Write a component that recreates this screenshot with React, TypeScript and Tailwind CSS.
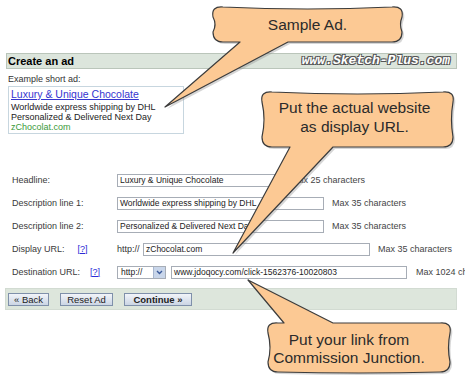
import React from "react";

type Tail = { side: "top" | "bottom"; b0: number; b1: number; ax: number; ay: number };

type Callout = {
  x0: number;
  y0: number;
  x1: number;
  y1: number;
  tail: Tail;
};

// wavy rounded callout with a pointed tail merged into one edge
function bubblePath({ x0, y0, x1, y1, tail }: Callout) {
  const r = 10;
  const midY = (y0 + y1) / 2;
  const top =
    tail.side === "top"
      ? `L ${tail.b0} ${y0} L ${tail.ax} ${tail.ay} L ${tail.b1} ${y0} L ${x1 - r} ${y0}`
      : `Q ${(x0 + x1) / 2} ${y0 + 4} ${x1 - r} ${y0}`;
  const bottom =
    tail.side === "bottom"
      ? `L ${tail.b1} ${y1} L ${tail.ax} ${tail.ay} L ${tail.b0} ${y1} L ${x0 + r} ${y1}`
      : `Q ${(x0 + x1) / 2} ${y1 + 2} ${x0 + r} ${y1}`;
  return [
    `M ${x0 + r} ${y0}`,
    top,
    `Q ${x1 + 2} ${y0 - 1} ${x1} ${y0 + r}`,
    `Q ${x1 - 3} ${midY} ${x1} ${y1 - r}`,
    `Q ${x1} ${y1} ${x1 - r} ${y1}`,
    bottom,
    `Q ${x0} ${y1} ${x0} ${y1 - r}`,
    `Q ${x0 + 4} ${midY} ${x0} ${y0 + r}`,
    `Q ${x0 - 2} ${y0 - 1} ${x0 + r} ${y0}`,
    "Z",
  ].join(" ");
}

const callouts: Callout[] = [
  { x0: 213, y0: 7, x1: 402, y1: 42, tail: { side: "bottom", b0: 240, b1: 288, ax: 165, ay: 107 } },
  { x0: 262, y0: 92, x1: 453, y1: 147, tail: { side: "bottom", b0: 290, b1: 333, ax: 233, ay: 253 } },
  { x0: 268, y0: 323, x1: 450, y1: 372, tail: { side: "top", b0: 284, b1: 333, ax: 248, ay: 280 } },
];

function Field({ width, children }: { width: string; children?: React.ReactNode }) {
  return (
    <div
      className={`${width} shrink-0 h-[13px] border border-[#a7adb6] bg-white px-[2px] text-[8.5px] leading-[11px] text-[#222] whitespace-nowrap overflow-hidden`}
    >
      {children}
    </div>
  );
}

function Hint({ gap, children }: { gap: string; children: React.ReactNode }) {
  return <span className={`${gap} shrink-0 text-[9px] text-[#444] whitespace-nowrap`}>{children}</span>;
}

function Label({ children }: { children: React.ReactNode }) {
  return <div className="ml-[12px] w-[105px] shrink-0 flex whitespace-nowrap">{children}</div>;
}

function Help({ className }: { className: string }) {
  return <span className={`${className} text-[9px] text-[#2b2bd6] underline`}>[?]</span>;
}

export default function App() {
  return (
    <div className="relative w-[465px] h-[381px] overflow-hidden bg-white font-['Liberation_Sans',Arial,sans-serif]">
      {/* header bar */}
      <div className="mt-[53px] ml-[6px] w-[451px] h-[16px] flex items-center justify-between border border-[#bac5ba] bg-[#dce5dc] pl-[1px] pr-[6px]">
        <span className="text-[11px] font-bold leading-[14px] text-black">Create an ad</span>
        <span className="font-['Liberation_Mono',monospace] italic font-bold text-[13px] leading-[14px] text-white [text-shadow:1px_1px_0_#555,-1px_-1px_0_#555,1px_-1px_0_#555,-1px_1px_0_#555]">
          www.Sketch-Plus.com
        </span>
      </div>

      {/* example ad */}
      <div className="mt-[5px] ml-[8px] text-[9px] leading-[10px] text-[#333]">Example short ad:</div>
      <div className="mt-[2px] ml-[8px] w-[176px] h-[48px] border border-[#c7d6df] px-[2px] pt-[1px]">
        <div className="text-[10.5px] leading-[12px] text-[#3535cf] underline">Luxury &amp; Unique Chocolate</div>
        <div className="mt-[2px] text-[9px] leading-[10px] text-[#222]">Worldwide express shipping by DHL</div>
        <div className="text-[9px] leading-[10px] text-[#222]">Personalized &amp; Delivered Next Day</div>
        <div className="text-[9px] leading-[10px] text-[#3a9a3a]">zChocolat.com</div>
      </div>

      {/* form rows */}
      <div className="mt-[35px] flex flex-col text-[9px] text-[#3a3a3a]">
        <div className="h-[23px] flex items-center">
          <Label>Headline:</Label>
          <Field width="w-[166px]">Luxury &amp; Unique Chocolate</Field>
          <Hint gap="ml-[8px]">Max 25 characters</Hint>
        </div>
        <div className="h-[23px] flex items-center">
          <Label>Description line 1:</Label>
          <Field width="w-[207px]">Worldwide express shipping by DHL</Field>
          <Hint gap="ml-[8px]">Max 35 characters</Hint>
        </div>
        <div className="h-[23px] flex items-center">
          <Label>Description line 2:</Label>
          <Field width="w-[207px]">Personalized &amp; Delivered Next Day</Field>
          <Hint gap="ml-[8px]">Max 35 characters</Hint>
        </div>
        <div className="h-[23px] flex items-center">
          <Label>
            <span>Display URL:</span>
            <Help className="ml-[13px]" />
          </Label>
          <span className="w-[26px] shrink-0 text-[9px] text-[#333]">http://</span>
          <Field width="w-[227px]">zChocolat.com</Field>
          <Hint gap="ml-[8px]">Max 35 characters</Hint>
        </div>
        <div className="h-[23px] flex items-center">
          <Label>
            <span>Destination URL:</span>
            <Help className="ml-[10px]" />
          </Label>
          <div className="w-[49px] h-[13px] shrink-0 flex items-stretch border border-[#a7adb6] bg-white">
            <span className="flex-1 pl-[3px] text-[8.5px] leading-[11px] text-[#222]">http://</span>
            <span className="w-[12px] flex items-center justify-center border-l border-[#a7b7d0] bg-[#c9d6ea]">
              <svg width="7" height="5" viewBox="0 0 7 5">
                <path d="M1 1 L3.5 3.5 L6 1" fill="none" stroke="#3b5a9a" strokeWidth="1.4" />
              </svg>
            </span>
          </div>
          <div className="ml-[5px] shrink-0">
            <Field width="w-[236px]">www.jdoqocy.com/click-1562376-10020803</Field>
          </div>
          <Hint gap="ml-[9px]">Max 1024 characters</Hint>
        </div>
      </div>

      {/* button bar */}
      <div className="mt-[4px] ml-[5px] w-[452px] h-[22px] flex items-center gap-[11px] border border-[#d2dbd2] bg-[#dde6dc] pl-[2px]">
        {[
          { label: "« Back", w: "w-[41px]", bold: false },
          { label: "Reset Ad", w: "w-[53px]", bold: false },
          { label: "Continue »", w: "w-[68px]", bold: true },
        ].map((b) => (
          <button
            key={b.label}
            className={`${b.w} h-[13px] flex items-center justify-center border border-[#7f90aa] bg-gradient-to-b from-[#f1f4f9] to-[#cbd5e4] text-[9.5px] leading-[11px] text-[#222] ${
              b.bold ? "font-bold" : ""
            }`}
          >
            {b.label}
          </button>
        ))}
      </div>

      {/* callouts */}
      <svg className="absolute left-0 top-0 pointer-events-none" width="465" height="381" viewBox="0 0 465 381">
        {callouts.map((c, i) => (
          <g key={i}>
            <path d={bubblePath(c)} transform="translate(2 2)" fill="#8a8a8a" opacity="0.35" />
            <path d={bubblePath(c)} fill="#fcc994" stroke="#3c3c3c" strokeWidth="1.2" strokeLinejoin="round" />
          </g>
        ))}
      </svg>
      <div className="absolute left-[213px] top-[7px] w-[189px] h-[35px] flex items-center justify-center text-[15.5px] leading-[18px] text-[#2b2b2b]">
        Sample Ad.
      </div>
      <div className="absolute left-[262px] top-[98px] w-[185px] text-center text-[15.5px] leading-[19px] text-[#2b2b2b]">
        Put the actual website
        <br />
        as display URL.
      </div>
      <div className="absolute left-[268px] top-[331px] w-[162px] text-center text-[15.5px] leading-[18px] text-[#2b2b2b]">
        Put your link from
        <br />
        Commission Junction.
      </div>
    </div>
  );
}
